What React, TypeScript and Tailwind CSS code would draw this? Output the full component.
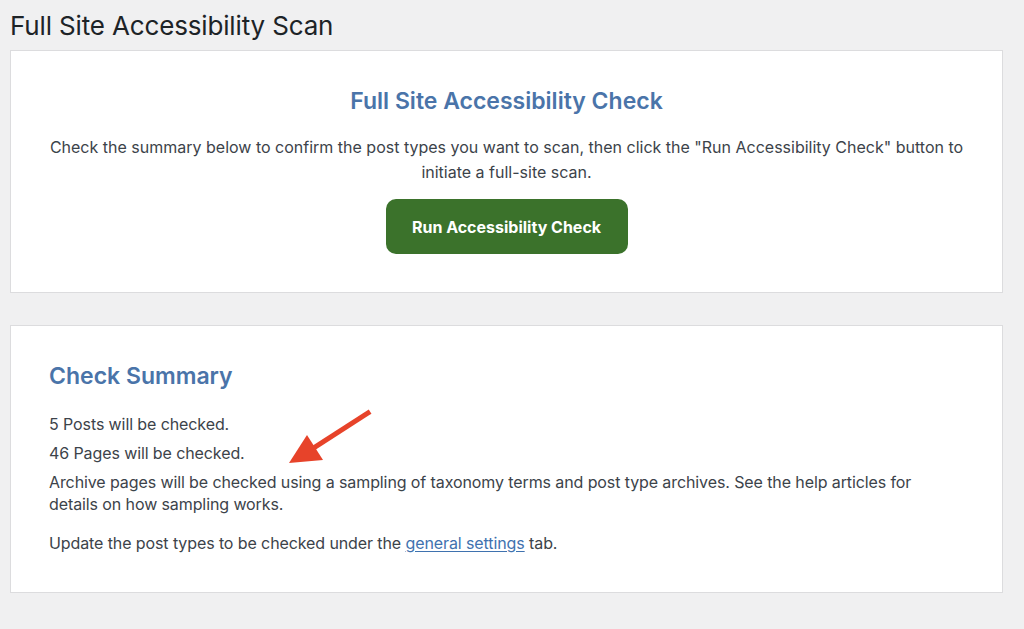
export default function App() {
  return (
    <div className="relative min-h-[629px] bg-[#f0f0f1] pl-[10px] pr-[21px] pt-[9px] pb-[20px] font-['Inter',sans-serif] text-[#3c434a]">
      <h1 className="text-[26px] leading-[34px] font-normal text-[#1d2327] tracking-[-0.15px]">
        Full Site Accessibility Scan
      </h1>

      <section className="mt-[7px] h-[243px] border border-[#dcdcde] bg-white px-8 pt-[35px] text-center">
        <h2 className="text-[23px] leading-[30px] font-semibold text-[#4a74a9]">
          Full Site Accessibility Check
        </h2>
        <p className="mx-auto mt-[19px] max-w-[915px] text-[16px] leading-[25px]">
          Check the summary below to confirm the post types you want to scan, then click the "Run
          Accessibility Check" button to initiate a full-site scan.
        </p>
        <button
          type="button"
          className="mt-[14px] h-[55px] w-[242px] rounded-[10px] bg-[#3b722b] text-[16px] font-bold text-white"
        >
          Run Accessibility Check
        </button>
      </section>

      <section className="mt-[32px] h-[268px] border border-[#dcdcde] bg-white px-[38px] pt-[34px]">
        <h2 className="text-[23px] leading-[32px] font-semibold text-[#4a74a9]">Check Summary</h2>
        <div className="mt-[21px] text-[16px] leading-[22px] tracking-[-0.1px]">
          <p>5 Posts will be checked.</p>
          <p className="mt-[7px]">46 Pages will be checked.</p>
          <p className="mt-[7px] max-w-[915px]">
            Archive pages will be checked using a sampling of taxonomy terms and post type archives.
            See the help articles for details on how sampling works.
          </p>
          <p className="mt-[17px]">
            Update the post types to be checked under the{' '}
            <a href="#" className="text-[#3f72af] underline underline-offset-2">
              general settings
            </a>{' '}
            tab.
          </p>
        </div>
      </section>

      <svg
        className="pointer-events-none absolute left-[280px] top-[405px]"
        width="100"
        height="70"
        viewBox="280 405 100 70"
      >
        <line x1="368" y1="413" x2="312" y2="449" stroke="#e7432a" strokeWidth="5" strokeLinecap="square" />
        <polygon points="289,463 307,435 323,460" fill="#e7432a" />
      </svg>
    </div>
  );
}
